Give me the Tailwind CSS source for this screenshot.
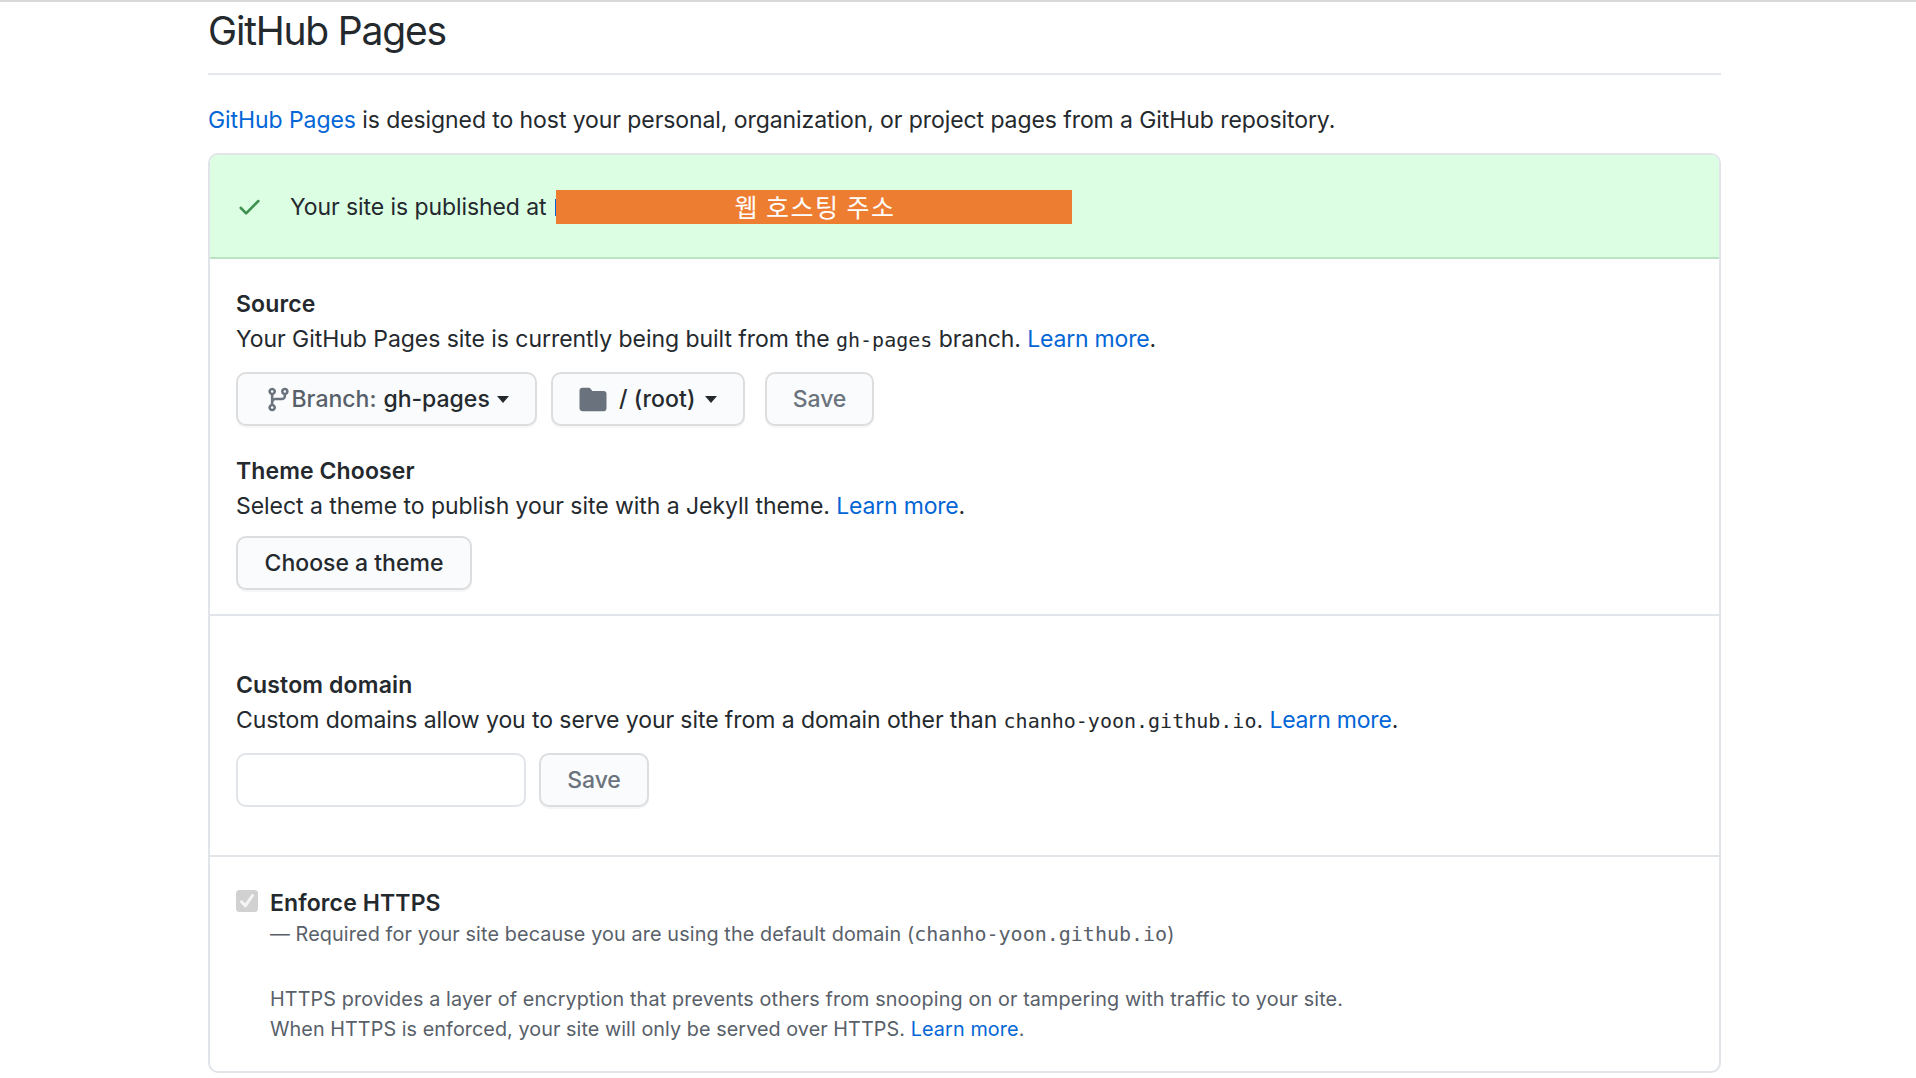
<!DOCTYPE html>
<html lang="en">
<head>
<meta charset="utf-8">
<title>GitHub Pages</title>
<script src="https://cdn.jsdelivr.net/npm/@tailwindcss/browser@4"></script>
</head>
<body class="bg-white">
<main class="h-[1078px] overflow-hidden border-t-2 border-[#d9d9d9] bg-white pl-[208px] font-['Inter',sans-serif] text-[23px] leading-[35px] tracking-[-0.08px] text-[#24292e] whitespace-nowrap">
  <div class="w-[1513px]">
    <h2 class="h-[73px] border-b-2 border-[#e4e7eb] text-[39px] leading-[58px] tracking-[-1.2px]">GitHub Pages</h2>
    <p class="mt-[28px]"><a class="text-[#0366d6]">GitHub Pages</a> is designed to host your personal, organization, or project pages from a GitHub repository.</p>

    <div class="mt-[15px] h-[920px] rounded-[10px] border-2 border-[#e1e4e8]">
      <!-- Publish status -->
      <div class="flex h-[104px] items-center rounded-t-[8px] border-b-2 border-[#b9e3c1] bg-[#dcffe4] pt-[2px] pl-[26px]">
        <svg class="mb-[2px] h-[27px] w-[27px] fill-[#3f9150]" viewBox="0 0 16 16"><path d="M13.78 4.22a.75.75 0 010 1.06l-7.25 7.25a.75.75 0 01-1.06 0L2.22 9.28a.75.75 0 011.06-1.06L6 10.94l6.72-6.72a.75.75 0 011.06 0z"/></svg>
        <span class="ml-[27px] w-[265px]">Your site is published at</span>
        <i class="h-[17px] w-px bg-[#0366d6]"></i>
        <div class="flex h-[34px] w-[516px] items-center justify-center bg-[#ed7d31] pb-[2px] pl-[2px] font-['Noto_Sans_CJK_KR',sans-serif] text-[25px] tracking-[1.5px] text-white">웹 호스팅 주소</div>
      </div>

      <!-- Source and theme -->
      <section class="h-[357px] border-b-2 border-[#e1e4e8] px-[26px] pt-[28px]">
        <h3 class="font-semibold tracking-[0.15px]">Source</h3>
        <p><span class="tracking-[-0.05px]">Your GitHub Pages site is currently being built from the</span> <code class="font-['DejaVu_Sans_Mono',monospace] text-[20px] tracking-normal">gh-pages</code> branch. <a class="tracking-[-0.2px] text-[#0366d6]">Learn more</a>.</p>
        <div class="mt-[14px] flex font-medium">
          <button class="flex h-[54px] w-[301px] items-center rounded-[10px] border-2 border-[#dcdddf] bg-[#fafbfc] pl-[26.5px] tracking-normal shadow-[0_2px_0_rgba(27,31,35,0.04)]">
            <svg class="h-[27px] w-[27px] fill-[#6a737d]" viewBox="0 0 16 16"><path fill-rule="evenodd" d="M11.75 2.5a.75.75 0 100 1.5.75.75 0 000-1.5zm-2.25.75a2.25 2.25 0 113 2.122V6A2.5 2.5 0 0110 8.5H6a1 1 0 00-1 1v1.128a2.251 2.251 0 11-1.5 0V5.372a2.25 2.25 0 111.5 0v1.836A2.492 2.492 0 016 7h4a1 1 0 001-1v-.628A2.25 2.25 0 019.5 3.25zM4.25 12a.75.75 0 100 1.5.75.75 0 000-1.5zM3.5 3.25a.75.75 0 111.5 0 .75.75 0 01-1.5 0z"/></svg>
            <span class="text-[#586069]">Branch:</span><span class="ml-[7px]">gh-pages</span>
            <i class="ml-[7px] h-0 w-0 border-x-6 border-t-7 border-x-transparent border-t-[#24292e]"></i>
          </button>
          <button class="ml-[14px] flex h-[54px] w-[194px] items-center rounded-[10px] border-2 border-[#dcdddf] bg-[#fafbfc] pl-[25px] tracking-[0.1px] shadow-[0_2px_0_rgba(27,31,35,0.04)]">
            <svg class="h-[27px] w-[30px] fill-[#6a737d]" viewBox="-.8 0 17.6 16"><path d="M1.75 1A1.75 1.75 0 000 2.75v10.5C0 14.216.784 15 1.75 15h12.5A1.75 1.75 0 0016 13.25v-8.5A1.75 1.75 0 0014.25 3h-6.5a.25.25 0 01-.2-.1l-.9-1.2c-.33-.44-.85-.7-1.4-.7h-3.5z"/></svg>
            <span class="ml-[11px]">/ (root)</span>
            <i class="ml-[9px] h-0 w-0 border-x-6 border-t-7 border-x-transparent border-t-[#24292e]"></i>
          </button>
          <button class="ml-5 h-[54px] w-[109px] rounded-[10px] border-2 border-[#dcdddf] bg-[#fafbfc] text-[#6a737d] shadow-[0_2px_0_rgba(27,31,35,0.04)]">Save</button>
        </div>
        <h3 class="mt-[28px] font-semibold tracking-[0.1px]">Theme Chooser</h3>
        <p><span class="tracking-[-0.05px]">Select a theme to publish your site with a Jekyll theme.</span> <a class="tracking-[-0.2px] text-[#0366d6]">Learn more</a>.</p>
        <button class="mt-3 block h-[54px] w-[236px] rounded-[10px] border-2 border-[#dcdddf] bg-[#fafbfc] font-medium tracking-normal shadow-[0_2px_0_rgba(27,31,35,0.04)]">Choose a theme</button>
      </section>

      <!-- Custom domain -->
      <section class="h-[241px] border-b-2 border-[#e1e4e8] px-[26px] pt-[52px]">
        <h3 class="font-semibold tracking-[0.15px]">Custom domain</h3>
        <p>Custom domains allow you to serve your site from a domain other than <code class="font-['DejaVu_Sans_Mono',monospace] text-[20px] tracking-normal">chanho-yoon.github.io</code>. <a class="tracking-[-0.2px] text-[#0366d6]">Learn more</a>.</p>
        <div class="mt-[14px] flex">
          <input class="block h-[54px] w-[290px] rounded-[10px] border-2 border-[#e1e4e8] bg-white">
          <button class="ml-[13px] h-[54px] w-[110px] rounded-[10px] border-2 border-[#dcdddf] bg-[#fafbfc] font-medium text-[#6a737d] shadow-[0_2px_0_rgba(27,31,35,0.04)]">Save</button>
        </div>
      </section>

      <!-- HTTPS -->
      <section class="flex px-[26px] pt-[28px]">
        <svg class="mt-[5px] h-[22px] w-[22px]" viewBox="0 0 22 22"><rect width="22" height="22" rx="3.5" fill="#d1d1d1"/><path d="M5.5 11.8l3.8 4L16.5 5.5" fill="none" stroke="#f5f5f5" stroke-width="3" stroke-linecap="round" stroke-linejoin="round"/></svg>
        <div class="ml-3">
          <h3 class="h-[34px] font-semibold leading-[36px] tracking-[0.12px]">Enforce HTTPS</h3>
          <div class="text-[19.8px] leading-[30px] tracking-[0.12px] text-[#586069]">
            <p>— Required for your site because you are using the default domain (<code class="font-['DejaVu_Sans_Mono',monospace] text-[20px] tracking-normal">chanho-yoon.github.io</code>)</p>
            <p class="mt-[35px]">HTTPS provides a layer of encryption that prevents others from snooping on or tampering with traffic to your site.</p>
            <p><span class="tracking-[0.06px]">When HTTPS is enforced, your site will only be served over HTTPS.</span> <a class="text-[#0366d6]">Learn more</a>.</p>
          </div>
        </div>
      </section>
    </div>
  </div>
</main>
</body>
</html>
